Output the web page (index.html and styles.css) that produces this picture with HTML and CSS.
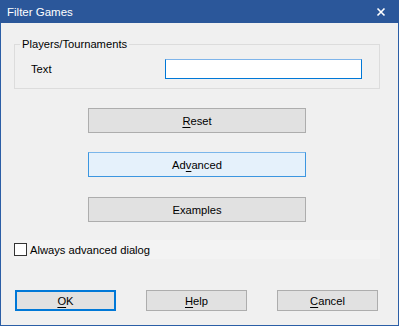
FILE: index.html
```html
<!DOCTYPE html>
<html lang="en">
<head>
    <meta charset="UTF-8">
    <title>Filter Games</title>
    <link rel="stylesheet" href="styles.css">
</head>
<body>
    <div class="window">
        <div class="titlebar">
            <span class="title">Filter Games</span>
            <svg class="close" width="10" height="10" viewBox="0 0 10 10">
                <path d="M1.5 1.5 L8.5 8.5 M8.5 1.5 L1.5 8.5" stroke="#fff" stroke-width="1.6"/>
            </svg>
        </div>

        <fieldset class="group">
            <legend>Players/Tournaments</legend>
            <div class="field-row">
                <label for="text">Text</label>
                <input type="text" id="text" class="text-input">
            </div>
        </fieldset>

        <div class="actions">
            <button class="btn wide"><u>R</u>eset</button>
            <button class="btn wide hover">Ad<u>v</u>anced</button>
            <button class="btn wide examples">Examples</button>
        </div>

        <div class="check-row">
            <span class="checkbox"></span>
            <span>Always advanced dialog</span>
        </div>

        <div class="footer">
            <button class="btn small default"><u>O</u>K</button>
            <button class="btn small"><u>H</u>elp</button>
            <button class="btn small"><u>C</u>ancel</button>
        </div>
    </div>
</body>
</html>
```

FILE: styles.css
```css
* {
    box-sizing: border-box;
}
body {
    margin: 0;
    background: #fff;
    font-family: "Liberation Sans", Arial, sans-serif;
    font-size: 11.2px;
    line-height: 16px;
    color: #000;
}
.window {
    width: 399px;
    height: 326px;
    background: #f0f0f0;
    border: 1px solid #2b5ea6;
    border-top: none;
    display: flex;
    flex-direction: column;
}
.titlebar {
    height: 23px;
    margin: 0 -1px;
    background: #2b579a;
    color: #fff;
    display: flex;
    align-items: center;
    justify-content: space-between;
    padding: 0 13px 0 7px;
}
.title {
    font-size: 11.5px;
}
.close {
    display: block;
}
.group {
    margin: 13px 18px 0 13px;
    padding: 7px 17px 9px 5px;
    border: 1px solid #dcdcdc;
}
.group legend {
    padding: 0 2px;
    margin: 0;
}
.field-row {
    display: flex;
    align-items: center;
    justify-content: space-between;
    padding-left: 11px;
}
.text-input {
    width: 197px;
    height: 20px;
    border: 1px solid #0078d7;
    border-top-color: #7eb4ea;
    background: #fff;
    outline: none;
    padding: 0 3px;
    font: inherit;
}
.actions {
    display: flex;
    flex-direction: column;
    gap: 19px;
    margin: 19px 0 0 87px;
}
.btn {
    font: inherit;
    color: #000;
    background: #e1e1e1;
    border: 1px solid #adadad;
    padding: 0;
    cursor: default;
}
.btn u {
    text-decoration-thickness: 1px;
    text-underline-offset: 2px;
}
.wide {
    width: 218px;
    height: 25px;
}
.examples {
    margin-top: 1px;
}
.hover {
    background: #e5f1fb;
    border-color: #3c96e0;
    border-top-color: #7ab6ea;
}
.check-row {
    display: flex;
    align-items: center;
    gap: 3px;
    height: 19px;
    margin: 18px 18px 0 13px;
    background: #f3f3f3;
}
.checkbox {
    width: 13px;
    height: 13px;
    border: 1px solid #333;
    background: #fff;
}
.footer {
    display: flex;
    gap: 30px;
    margin: 31px 0 0 14px;
}
.small {
    width: 101px;
    height: 21px;
}
.default {
    border: 2px solid #0078d7;
}
```
